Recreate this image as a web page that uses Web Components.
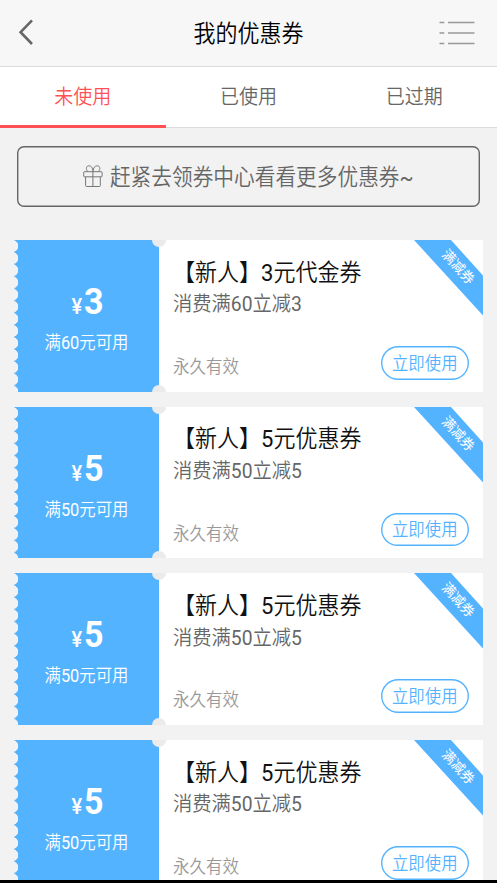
<!DOCTYPE html>
<html lang="zh-CN">
<head>
<meta charset="utf-8">
<title>我的优惠券</title>
<style>
html,body{margin:0;height:100%;overflow:hidden;background:#f2f2f2}
body{font-family:Roboto,"Noto Sans CJK SC",sans-serif;font-weight:350}
</style>
</head>
<body>
<coupon-page></coupon-page>
<script>
function define(name, html, setup) {
  const t = document.createElement('template');
  t.innerHTML = html;
  customElements.define(name, class extends HTMLElement {
    constructor() {
      super();
      this.attachShadow({mode: 'open'}).append(t.content.cloneNode(true));
    }
    connectedCallback() { if (setup) setup(this, this.shadowRoot); }
  });
}

// Digits carry a slightly heavier weight than the surrounding characters
const withDigits = s => s.replace(/\d+/g, '<span style="font-weight:400">$&</span>');

// Text set in slightly condensed proportions
define('tall-text', `<style>
:host{display:inline-block;white-space:nowrap;transform:scaleY(1.08);line-height:1}
</style><slot></slot>`);

define('nav-bar', `<style>
:host{display:grid;grid-template-columns:60px 1fr 60px;align-items:center;height:66px;background:#f7f7f7;border-bottom:1px solid #dcdcdc;color:#000;font-size:22px;text-align:center;box-sizing:content-box}
svg{display:block}
.back{margin-left:18px;margin-top:-2px}
.menu{margin-left:2px;margin-top:-1px}
tall-text{margin-top:1px}
</style>
<svg class="back" width="18" height="28" viewBox="0 0 18 28"><path d="M14 2.4 2.6 14.2 14 26" fill="none" stroke="#666" stroke-width="2.6"/></svg>
<tall-text><slot></slot></tall-text>
<svg class="menu" width="37" height="26" viewBox="0 0 37 26"><path d="M.5 2.5H5.3M9 2.5H35.5M.5 13H5.3M9 13H35.5M.5 23.5H5.3M9 23.5H35.5" fill="none" stroke="#999" stroke-width="1.6"/></svg>`);

define('tab-item', `<style>
:host{display:flex;justify-content:center;flex:1;height:61px;box-sizing:border-box;padding-top:20.5px;font-size:19px;color:#666;border-bottom:1px solid #dcdcdc}
:host([active]){color:#ff5053;border-bottom:3px solid #ff5053}
</style><tall-text><slot></slot></tall-text>`);

define('tab-bar', `<style>:host{display:flex;background:#fff;height:61px}</style><slot></slot>`);

define('gift-icon', `<style>:host{display:block}svg{display:block}</style>
<svg width="20" height="23" viewBox="0 0 20 23" fill="none" stroke="#777" stroke-width="1"><rect x=".7" y="6.7" width="18.4" height="5.1" rx=".6"/><path d="M2.6 11.8V20.7Q2.6 21.5 3.4 21.5H16.5Q17.3 21.5 17.3 20.7V11.8M9.9 6.7V21.5M9.9 6.5C9.9 2.5 8 .8 5.8 .8C3.4 .8 2.5 3.8 4.6 6.6M10.1 6.5C10.1 2.5 12.2 .8 14.3 .8C16.9 .8 17.8 3.8 15.5 6.6"/></svg>`);

define('coupon-banner', `<style>
:host{display:flex;align-items:center;justify-content:center;gap:6.5px;height:61px;box-sizing:border-box;margin:18px 17px 0;box-shadow:inset 0 0 0 1.4px #666;border-radius:7px;font-size:20.7px;color:#666}
gift-icon{margin-top:-1px}
tall-text{margin-top:2.5px}
</style><gift-icon></gift-icon><tall-text><slot></slot></tall-text>`);

define('coupon-ribbon', `<style>
:host{position:absolute;top:0;right:0;width:69px;height:75.5px;color:#fff;font-size:13.2px;font-weight:400}
svg{display:block}
span{position:absolute;left:44px;top:27px;line-height:1;white-space:nowrap;transform:translate(-50%,-50%) scaleY(1.09) rotate(45deg)}
</style><svg width="69" height="75.5" viewBox="0 0 69 75.5"><path d="M0 0H37L69 35.5V75.5Z" fill="#54b3ff"/></svg><span><slot></slot></span>`);

define('use-button', `<style>
:host{display:flex;align-items:center;justify-content:center;width:88.5px;height:33.5px;box-sizing:border-box;padding-top:4px;box-shadow:inset 0 0 0 1.4px #54b3ff;border-radius:17px;color:#54b3ff;font-size:16.4px}
</style><tall-text><slot></slot></tall-text>`);

define('coupon-value', `<style>
:host{display:flex;flex-direction:column;align-items:center;width:145px;height:100%;box-sizing:border-box;padding-top:44px;color:#fff;
background:radial-gradient(circle 6.1px at -1.8px 6.05px,#f2f2f2 5.8px,transparent 6.3px) 0 0/100% 12.13px,#54b3ff}
.amount{display:flex;align-items:baseline;font-weight:700;font-size:34px;line-height:1;margin-left:2px}
.yen{font-size:20px;font-weight:500;margin-right:2px}
.limit{font-size:16.4px;margin-top:18px}
</style><div class="amount"><tall-text class="yen">¥</tall-text><tall-text class="num"></tall-text></div><tall-text class="limit"></tall-text>`);

define('coupon-card', `<style>
:host{display:flex;position:relative;height:151.5px;background:#fff;overflow:hidden}
.info{flex:1;display:flex;flex-direction:column;align-items:flex-start;padding:21.8px 14px 12px 14px;box-sizing:border-box}
.name{font-size:22px;color:#111}
.desc{font-size:19.3px;color:#666;margin-top:10.5px}
.foot{display:flex;width:100%;justify-content:space-between;align-items:center;margin-top:auto}
.date{font-size:16.5px;color:#999;margin-top:11px}
.notch{position:absolute;left:138px;width:14px;height:14px;border-radius:50%;background:#ebebeb}
.top{top:-7px}.bottom{bottom:-7px}
</style>
<coupon-value></coupon-value>
<div class="info"><tall-text class="name"></tall-text><tall-text class="desc"></tall-text>
<div class="foot"><tall-text class="date">永久有效</tall-text><use-button>立即使用</use-button></div></div>
<i class="notch top"></i><i class="notch bottom"></i><coupon-ribbon>满减券</coupon-ribbon>`,
(el, r) => {
  const a = el.getAttribute('amount'), m = el.getAttribute('min');
  const v = r.querySelector('coupon-value').shadowRoot;
  v.querySelector('.num').textContent = a;
  v.querySelector('.limit').innerHTML = withDigits(`满${m}元可用`);
  r.querySelector('.name').innerHTML = withDigits(el.getAttribute('name'));
  r.querySelector('.desc').innerHTML = withDigits(`消费满${m}立减${a}`);
});

define('coupon-list', `<style>:host{display:grid;gap:15.2px;padding:33px 14px 0}</style><slot></slot>`);

define('coupon-page', `<style>
:host{display:flex;flex-direction:column;height:883px;box-sizing:border-box;overflow:hidden;border-bottom:3px solid #000;background:#f2f2f2}
nav-bar,tab-bar,coupon-banner,coupon-list{flex-shrink:0}
</style>
<nav-bar>我的优惠券</nav-bar>
<tab-bar><tab-item active>未使用</tab-item><tab-item>已使用</tab-item><tab-item>已过期</tab-item></tab-bar>
<coupon-banner>赶紧去领券中心看看更多优惠券<span style="font-weight:400">~</span></coupon-banner>
<coupon-list>
<coupon-card name="【新人】3元代金券" amount="3" min="60"></coupon-card>
<coupon-card name="【新人】5元优惠券" amount="5" min="50"></coupon-card>
<coupon-card name="【新人】5元优惠券" amount="5" min="50"></coupon-card>
<coupon-card name="【新人】5元优惠券" amount="5" min="50"></coupon-card>
</coupon-list>`);
</script>
</body>
</html>
